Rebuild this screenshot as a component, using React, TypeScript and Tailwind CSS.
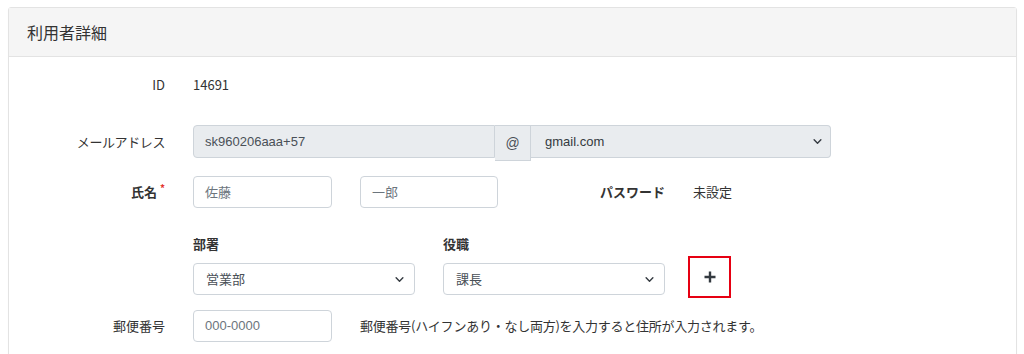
import React from "react";

const jp = "font-['Noto_Sans_CJK_JP','Noto_Sans',sans-serif]";
const lat = "font-['Liberation_Sans','Noto_Sans_CJK_JP',sans-serif]";

function Chevron() {
  return (
    <svg width="9" height="9" viewBox="0 0 16 16" className="shrink-0">
      <path d="M2 5l6 6 6-6" fill="none" stroke="#343a40" strokeWidth="2.5" strokeLinecap="round" strokeLinejoin="round" />
    </svg>
  );
}

function Select({ value, w, bg = "bg-white", font = jp }: { value: string; w: string; bg?: string; font?: string }) {
  return (
    <div className={`${w} h-[32px] ${bg} border border-[#ced4da] rounded-[4px] flex items-center justify-between pl-[12px] pr-[10px] text-[13px] text-[#495057] ${font}`}>
      <span>{value}</span>
      <Chevron />
    </div>
  );
}

function Input({ value, w, placeholder }: { value: string; w: string; placeholder?: boolean }) {
  return (
    <div className={`${w} h-[32px] bg-white border border-[#ced4da] rounded-[4px] flex items-center px-[11px] text-[13px] ${placeholder ? "text-[#6c757d]" : "text-[#495057]"}`}>
      {value}
    </div>
  );
}

export default function App() {
  return (
    <div className={`bg-white w-[1024px] h-[354px] overflow-hidden pt-[7px] pl-[8px] pr-[7px] ${jp}`}>
      <div className="border border-[#e3e3e3] rounded-[3px] shadow-[0_1px_1px_rgba(0,0,0,0.05)] h-[400px]">
        <div className="h-[49px] bg-[#f5f5f5] border-b border-[#e3e3e3] flex items-center pl-[18px] text-[16px] text-[#333]">
          利用者詳細
        </div>
        <div className="text-[13px] text-[#333]">
          {/* ID */}
          <div className="flex items-center h-[30px] mt-[13px]">
            <div className="w-[156px] text-right">ID</div>
            <div className="ml-[28px]">14691</div>
          </div>
          {/* Email */}
          <div className="flex items-start mt-[25px]">
            <div className="w-[156px] text-right h-[33px] flex items-center justify-end tracking-[-0.4px]">メールアドレス</div>
            <div className="ml-[28px] flex items-start">
              <div className={`w-[302px] h-[33px] bg-[#e9ecef] border border-[#ced4da] rounded-l-[4px] flex items-center px-[11px] text-[13px] text-[#495057] ${lat}`}>
                sk960206aaa+57
              </div>
              <div className={`w-[36px] h-[36px] bg-[#e9ecef] border border-l-0 border-[#ced4da] flex items-center justify-center text-[14px] text-[#495057] ${lat}`}>
                @
              </div>
              <div className={`w-[300px] h-[33px] bg-[#e9ecef] border border-l-0 border-[#ced4da] rounded-r-[4px] flex items-center justify-between pl-[14px] pr-[8px] text-[13px] text-[#343a40] ${lat}`}>
                <span>gmail.com</span>
                <Chevron />
              </div>
            </div>
          </div>
          {/* Name */}
          <div className="flex items-center mt-[15px] h-[32px]">
            <div className="w-[156px] text-right font-bold">
              氏名<span className="text-[#e3342f] text-[10px] align-top ml-[3px] relative top-[-2px]">*</span>
            </div>
            <div className="ml-[28px]">
              <Input value="佐藤" w="w-[139px]" placeholder />
            </div>
            <div className="ml-[28px]">
              <Input value="一郎" w="w-[138px]" placeholder />
            </div>
            <div className="w-[167px] text-right font-bold">パスワード</div>
            <div className="ml-[28px]">未設定</div>
          </div>
          {/* Dept / Position */}
          <div className="flex mt-[25px]">
            <div className="w-[156px]" />
            <div className="ml-[28px] flex flex-col">
              <div className="font-bold h-[22px] leading-[22px]">部署</div>
              <div className="mt-[8px]">
                <Select value="営業部" w="w-[222px]" />
              </div>
            </div>
            <div className="ml-[28px] flex flex-col">
              <div className="font-bold h-[22px] leading-[22px]">役職</div>
              <div className="mt-[8px]">
                <Select value="課長" w="w-[222px]" />
              </div>
            </div>
            <div className="ml-[23px] mt-[23px] w-[43px] h-[42px] border-2 border-[#e60012] flex items-center justify-center">
              <svg width="12" height="12" viewBox="0 0 12 12">
                <path d="M6 0.5v11M0.5 6h11" stroke="#343a40" strokeWidth="2.4" />
              </svg>
            </div>
          </div>
          {/* Postal */}
          <div className="flex items-center mt-[12px] h-[32px]">
            <div className="w-[156px] text-right">郵便番号</div>
            <div className={`ml-[28px] ${lat}`}>
              <Input value="000-0000" w="w-[139px]" placeholder />
            </div>
            <div className="ml-[28px] tracking-[-0.25px]">郵便番号(ハイフンあり・なし両方)を入力すると住所が入力されます。</div>
          </div>
        </div>
      </div>
    </div>
  );
}
